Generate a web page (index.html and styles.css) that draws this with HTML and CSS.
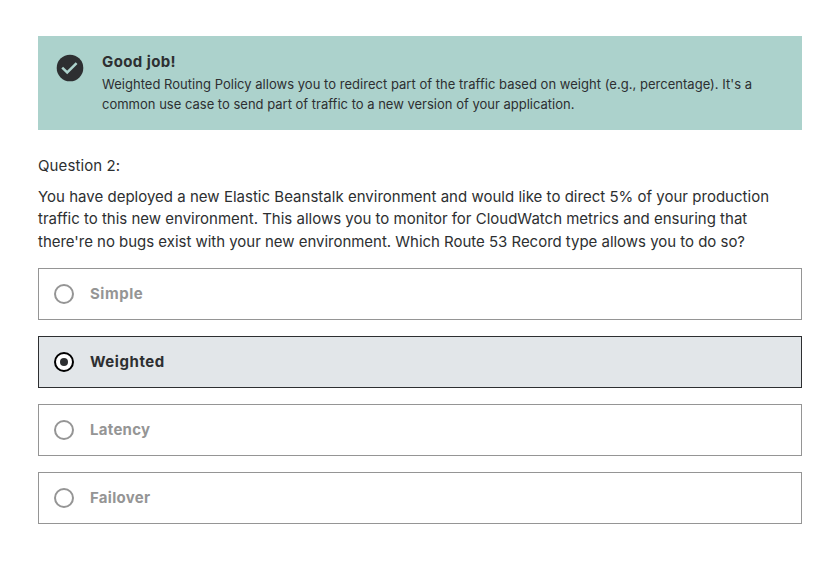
FILE: index.html
```html
<!DOCTYPE html>
<html lang="en">
<head>
<meta charset="utf-8">
<title>Quiz</title>
<link rel="stylesheet" href="styles.css">
</head>
<body>
<main class="quiz">
  <section class="alert">
    <svg class="alert-icon" viewBox="0 0 28 28" width="28" height="28">
      <circle cx="14" cy="14" r="13.3" fill="#2d2f31"/>
      <path d="M6.2 13.7 L11.2 18.5 L20.6 9.2" fill="none" stroke="#acd2cc" stroke-width="2.5"/>
    </svg>
    <div class="alert-body">
      <h2 class="alert-title">Good job!</h2>
      <p class="alert-text"><span class="a1">Weighted Routing Policy allows you to redirect part of the traffic based on weight (e.g., percentage). It's a</span><br><span class="a2">common use case to send part of traffic to a new version of your application.</span></p>
    </div>
  </section>
  <p class="question-label">Question 2:</p>
  <p class="question-text"><span class="q1">You have deployed a new Elastic Beanstalk environment and would like to direct 5% of your production</span><br><span class="q2">traffic to this new environment. This allows you to monitor for CloudWatch metrics and ensuring that</span><br><span class="q3">there're no bugs exist with your new environment. Which Route 53 Record type allows you to do so?</span></p>
  <ul class="answers">
    <li class="answer"><span class="radio"></span><span class="label wide">Simple</span></li>
    <li class="answer selected"><span class="radio"></span><span class="label wide">Weighted</span></li>
    <li class="answer"><span class="radio"></span><span class="label">Latency</span></li>
    <li class="answer"><span class="radio"></span><span class="label">Failover</span></li>
  </ul>
</main>
</body>
</html>
```
FILE: styles.css
```css
* { box-sizing: border-box; margin: 0; padding: 0; }
body {
  background: #fff;
  color: #2d2f31;
  font-family: Inter, "Liberation Sans", sans-serif;
}
.quiz { width: 764px; margin: 36px 0 0 38px; }
.alert {
  display: flex;
  gap: 18px;
  height: 94px;
  padding: 16px 18px;
  background: #acd2cc;
}
.alert-icon { flex: none; margin-top: 2px; }
.alert-body { white-space: nowrap; }
.alert-title { font-size: 15px; line-height: 20px; font-weight: 700; letter-spacing: 0.4px; }
.alert-text { margin-top: 2px; font-size: 13px; line-height: 20px; }
.a1 { letter-spacing: 0.025px; }
.question-label { margin-top: 25px; font-size: 15px; line-height: 22px; letter-spacing: 0.1px; }
.question-text { margin-top: 9px; font-size: 15px; line-height: 22.4px; white-space: nowrap; }
.q1 { letter-spacing: 0.016px; }
.q3 { letter-spacing: -0.025px; }
.answers { list-style: none; display: grid; gap: 16px; margin-top: 15px; }
.answer {
  display: flex;
  align-items: center;
  gap: 16px;
  height: 52px;
  padding-left: 15px;
  border: 1px solid #959595;
  color: #959595;
  font-size: 15px;
  font-weight: 700;
}
.label { padding-bottom: 2px; letter-spacing: 0.28px; }
.label.wide { letter-spacing: 0.55px; }
.radio {
  display: grid;
  place-items: center;
  width: 20px;
  height: 20px;
  border: 2px solid #959595;
  border-radius: 50%;
  background: #fff;
}
.selected { border-color: #2d2f31; background: #e2e6e9; color: #2d2f31; }
.selected .radio { border-color: #000; }
.selected .radio::before { content: ""; width: 8px; height: 8px; border-radius: 50%; background: #2d2f31; }
```
